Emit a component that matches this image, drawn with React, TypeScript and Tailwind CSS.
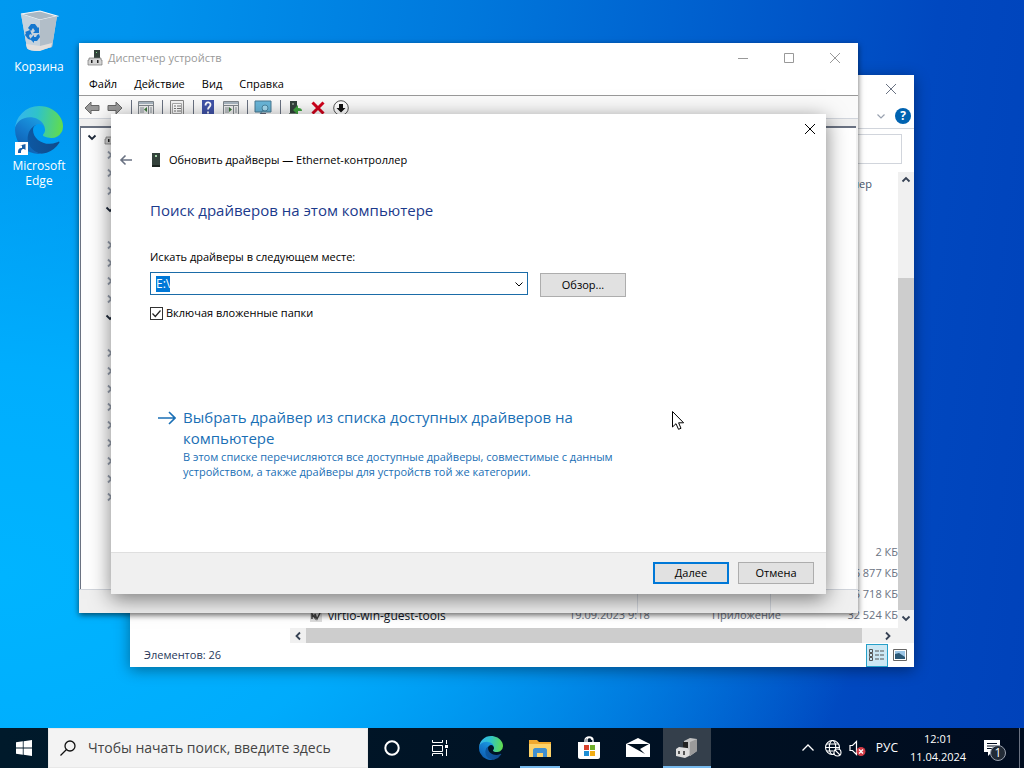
import { useEffect, useRef } from 'react';
import type { ReactNode } from 'react';
import clsx from 'clsx';

const menuItems = ['Файл', 'Действие', 'Вид', 'Справка'];

// one entry per visible tree line: c = collapsed, e = expanded, '' = leaf
const treeRows = ['c', 'c', 'c', 'e', '', 'c', 'c', 'c', 'c', 'e', '', 'c', 'c', 'c', 'c', 'c', 'c', 'c', 'c', 'c'];

const files = [
  { name: '', date: '', type: '', size: '2 КБ' },
  { name: '', date: '', type: '', size: '6 877 КБ' },
  { name: '', date: '', type: '', size: '5 718 КБ' },
  { name: 'virtio-win-guest-tools', date: '19.09.2023 9:18', type: 'Приложение', size: '32 524 КБ' },
];

type Direction = 'up' | 'down' | 'left' | 'right';

const chevronPaths: Record<Direction, string> = {
  up: 'M2.500 7.500 6 4l3.500 3.500',
  down: 'M2.500 4.500 6 8l3.500-3.500',
  left: 'M8 2.500 4.500 6 8 9.500',
  right: 'M4 2.500 7.500 6 4 9.500',
};

function Chevron({ dir, className, weight = 1.8 }: { dir: Direction; className?: string; weight?: number }) {
  return (
    <svg viewBox="0 0 12 12" className={clsx('size-3 shrink-0', className)} fill="none" stroke="currentColor" strokeWidth={weight}>
      <path d={chevronPaths[dir]} />
    </svg>
  );
}

function CloseIcon() {
  return (
    <svg viewBox="0 0 12 12" className="size-3" fill="none" stroke="currentColor" strokeWidth="1">
      <path d="M1 1l10 10M11 1L1 11" />
    </svg>
  );
}

function EdgeIcon({ className, id }: { className: string; id: string }) {
  return (
    <svg viewBox="0 0 256 256" className={className}>
      <defs>
        <linearGradient id={`${id}-a`} x1="0" y1="0" x2="1" y2="0">
          <stop offset="0" stopColor="#0c59a4" />
          <stop offset="1" stopColor="#114a8b" />
        </linearGradient>
        <linearGradient id={`${id}-b`} x1="0.8" y1="0.1" x2="0.3" y2="1">
          <stop offset="0" stopColor="#1b9de2" />
          <stop offset="0.5" stopColor="#1479cc" />
          <stop offset="1" stopColor="#0d5cae" />
        </linearGradient>
        <linearGradient id={`${id}-c`} x1="0" y1="0.4" x2="1" y2="0.5">
          <stop offset="0" stopColor="#35b4f1" />
          <stop offset="0.45" stopColor="#2fc3c9" />
          <stop offset="1" stopColor="#62dc4c" />
        </linearGradient>
      </defs>
      <path fill={`url(#${id}-a)`} d="M231 190.500c-3.400 1.800-6.900 3.300-10.500 4.700a101 101 0 0 1-35.900 6.500c-47.300 0-88.500-32.500-88.500-74.300a31.500 31.500 0 0 1 16.400-27.300c-42.800 1.800-53.800 46.400-53.800 72.500 0 73.900 68.100 81.400 82.800 81.400 7.900 0 19.800-2.300 27-4.600l1.300-.4a128 128 0 0 0 66.600-52.800 4 4 0 0 0-5.400-5.700z" />
      <path fill={`url(#${id}-b)`} d="M105.700 241.400a79 79 0 0 1-22.700-21.300A80.700 80.700 0 0 1 112.500 100c3.100-1.500 8.500-4.100 15.600-4a32.400 32.400 0 0 1 25.700 13 31.900 31.900 0 0 1 6.300 18.700c0-.2 24.500-79.600-80-79.600-43.900 0-80 41.700-80 78.200a130 130 0 0 0 12.100 56 128 128 0 0 0 156.400 67 75.500 75.500 0 0 1-62.800-8z" />
      <path fill={`url(#${id}-c)`} d="M152.300 148.900c-.9 1-3.400 2.500-3.400 5.600 0 2.600 1.700 5.200 4.800 7.300 14.300 10 41.400 8.600 41.500 8.600a59.600 59.600 0 0 0 30.300-8.300A61.400 61.400 0 0 0 256 109.200c.3-22.400-8-37.300-11.300-43.900C223.500 23.900 177.700 0 128 0A128 128 0 0 0 0 126.200c.5-36.500 36.800-66 80-66 3.500 0 23.500.3 42 10.100 16.300 8.600 24.900 18.900 30.800 29.200 6.200 10.700 7.300 24.100 7.300 29.500 0 5.300-2.700 13.300-7.800 19.900z" />
    </svg>
  );
}

function BinIcon() {
  return (
    <svg viewBox="0 0 40 44" className="h-11 w-10">
      <path d="M2 5l6 34c2 3 11 4 14 2l11-3 5-31-17-5z" fill="#d3dbe2" />
      <path d="M2 5l19-3 17 5-17 4z" fill="#a9b8c4" stroke="#f4f7f9" strokeWidth="1.200" />
      <path d="M2 5l19 6v30c-4 1-10 1-13-2z" fill="#c5d2dd" />
      <path d="M21 11l17-4-5 31-12 3z" fill="#b2bec8" />
      <path d="M7 35l14 2 12-3-1 4-11 4c-4 0-11 0-13-3z" fill="#e3dfdc" />
      <g fill="#1477cf">
        <path d="M9 19l3-4h4l3 4 1-1v6h-6l2-2-2-3-2 3z" />
        <path d="M20 25l1 3-3 4h-3v2l-4-4 4-4v2h2l1-2z" />
        <path d="M6 23l5-2 2 5-2-1-1 2 2 4-3-1-3-4 1-2z" />
      </g>
    </svg>
  );
}

// grey controller box with the dark card standing on it
function DevicesIcon({ className }: { className?: string }) {
  return (
    <svg viewBox="0 0 16 16" className={clsx('size-4 shrink-0', className)}>
      <path d="M7 0h6v9H7z" fill="#34423c" />
      <path d="M9 2h1v1H9z" fill="#7fdc8a" />
      <path d="M2 8h12v2h1v5H1v-5h1z" fill="#d4d4d4" stroke="#777" strokeWidth=".7" />
      <path d="M4 10h1.500v3H4zM10 10h1.500v3H10z" fill="#222" />
    </svg>
  );
}

function CardIcon() {
  return (
    <svg viewBox="0 0 10 16" className="h-4 w-2.5 shrink-0">
      <path d="M1 1h8v12H1z" fill="#34423c" />
      <path d="M4 3h2v2H4z" fill="#a5d8a8" />
      <path d="M1 13h8v2H1z" fill="#1d2521" />
    </svg>
  );
}

function PanelIcon({ mark }: { mark: string }) {
  return (
    <svg viewBox="0 0 16 16" className="size-4">
      <path d="M.5 1.500h15v13H.5z" fill="#f1f1f1" stroke="#7f868c" />
      <path d="M1 2h14v2H1z" fill="#a8b5c0" />
      <path d="M1 5.500h14M10.500 6v8" stroke="#7f868c" />
      <path d="M2 8h4M2 10h4M2 12h4M12 8h2M12 10h2M12 12h2" stroke="#8b949b" />
      <path d={mark} fill="#3d7a3d" />
    </svg>
  );
}

function ArrowGlyph({ flip }: { flip?: boolean }) {
  return (
    <svg viewBox="0 0 16 14" className={clsx('h-3.5 w-4', flip && '-scale-x-100')}>
      <path d="M1 7l6-6v3.500h8v5H7V13z" fill="#999" stroke="#666" />
    </svg>
  );
}

const toolbarGroups: { label: string; icon: ReactNode }[][] = [
  [
    { label: 'Назад', icon: <ArrowGlyph /> },
    { label: 'Вперёд', icon: <ArrowGlyph flip /> },
  ],
  [{ label: 'Дерево консоли', icon: <PanelIcon mark="M9 7v5L6 9.500z" /> }],
  [
    {
      label: 'Свойства',
      icon: (
        <svg viewBox="0 0 16 16" className="size-4">
          <path d="M1.500.5h13v15h-13z" fill="#f4f4f4" stroke="#888" />
          <path d="M3.500 3.500h9v10h-9z" fill="#fff" stroke="#aaa" />
          <path d="M5 6h2M8 6h4M5 8.500h2M8 8.500h4M5 11h2M8 11h4" stroke="#777" />
        </svg>
      ),
    },
  ],
  [
    {
      label: 'Справка',
      icon: (
        <svg viewBox="0 0 16 16" className="size-4">
          <path d="M2 0h12v16H2z" fill="#4053a8" />
          <path d="M5.500 5.500c0-4 5-4 5-.8 0 2.300-2.500 2.300-2.500 4.800M8 11.500v2" fill="none" stroke="#fff" strokeWidth="1.800" />
        </svg>
      ),
    },
    { label: 'Панель действий', icon: <PanelIcon mark="M6 7v5l3-2.500z" /> },
  ],
  [
    {
      label: 'Обновить конфигурацию',
      icon: (
        <svg viewBox="0 0 18 16" className="h-4 w-4.5">
          <path d="M1 1h16v11H1z" fill="#69b7da" stroke="#4a7b93" />
          <path d="M6 14h6" stroke="#667" strokeWidth="2" />
          <circle cx="11" cy="8" r="3" fill="#a6dcf2" stroke="#4b87a3" />
          <path d="M9 10l-3 4" stroke="#4b87a3" />
        </svg>
      ),
    },
  ],
  [
    {
      label: 'Обновить драйвер',
      icon: (
        <svg viewBox="0 0 16 16" className="size-4">
          <path d="M3 1h7v12H3z" fill="#34423c" />
          <path d="M5 3h2v2H5zM2 13h9v2H2z" fill="#7a8a80" />
          <path d="M6 10l5-5v3c3 0 4 1 4 3h-4v4z" fill="#3fa43f" />
        </svg>
      ),
    },
    {
      label: 'Удалить',
      icon: (
        <svg viewBox="0 0 16 16" className="size-4" stroke="#d0021b" strokeWidth="3">
          <path d="M2.500 2.500l11 11M13.500 2.500l-11 11" />
        </svg>
      ),
    },
    {
      label: 'Отключить',
      icon: (
        <svg viewBox="0 0 16 16" className="size-4">
          <circle cx="8" cy="8" r="7.300" fill="#fff" stroke="#555" />
          <path d="M6 4h4v4h2.500L8 12.500 3.500 8H6z" fill="#111" />
        </svg>
      ),
    },
  ],
];

function ExplorerWindow() {
  return (
    <section className="absolute top-[75px] left-[130px] flex h-[592px] w-[784px] flex-col bg-white text-[11px] shadow-[0_3px_14px_rgba(0,0,0,0.4)]">
      <div className="flex h-7 shrink-0 justify-end">
        <button aria-label="Закрыть" className="flex w-[46px] items-center justify-center text-gray-500">
          <CloseIcon />
        </button>
      </div>
      <div className="flex h-[26px] shrink-0 items-center justify-end gap-2 border-b border-gray-300 pr-[3px]">
        <Chevron dir="down" weight={1.2} className="text-gray-400" />
        <button aria-label="Справка" className="size-4 rounded-full bg-[#0063b1] text-center text-xs leading-4 font-bold text-white">
          ?
        </button>
      </div>
      <div className="flex shrink-0 justify-end pt-[5px] pr-3">
        <input aria-label="Поиск" className="h-[30px] w-[200px] border border-gray-300 px-2 outline-none" />
      </div>
      <div className="flex min-h-0 flex-1 pt-2">
        <div className="w-40 shrink-0" />
        <div className="flex min-w-0 flex-1 flex-col">
          <table className="h-full w-full table-fixed text-left text-gray-500">
            <thead>
              <tr className="h-6">
                <th className="w-[279px]" />
                <th className="w-[143px]" />
                <th />
                <th className="w-[75px] pr-[26px] text-right font-normal text-slate-600">Размер</th>
              </tr>
            </thead>
            <tbody>
              <tr>
                <td colSpan={4} />
              </tr>
              {files.map((file) => (
                <tr key={file.size} className="h-[21px] whitespace-nowrap">
                  <td className="text-xs text-gray-900">
                    {file.name && (
                      <span className="flex items-center gap-1.5 pl-5">
                        <svg viewBox="0 0 12 12" className="size-3">
                          <path d="M0 0h12v12H0z" fill="#ddd" />
                          <path d="M2 9V4l3 4V4l2 5 3-6" fill="none" stroke="#444" strokeWidth="1.500" />
                        </svg>
                        {file.name}
                      </span>
                    )}
                  </td>
                  <td>{file.date}</td>
                  <td>{file.type}</td>
                  <td className="text-right">{file.size}</td>
                </tr>
              ))}
            </tbody>
          </table>
          <div className="flex h-[17px] shrink-0 items-center border-t-2 border-white bg-[#f0f0f0] text-gray-700">
            <span className="flex w-4 justify-center">
              <Chevron dir="left" />
            </span>
            <span className="h-full flex-1 bg-[#cdcdcd]" />
            <span className="flex w-9 justify-center pl-4">
              <Chevron dir="right" />
            </span>
          </div>
        </div>
        <div className="flex w-4 shrink-0 flex-col items-center bg-[#f0f0f0] pb-[17px] text-gray-700">
          <span className="flex h-[106px] items-start pt-0.5">
            <Chevron dir="up" />
          </span>
          <span className="w-full flex-1 bg-[#cdcdcd]" />
          <span className="flex h-4 items-center">
            <Chevron dir="down" />
          </span>
        </div>
      </div>
      <footer className="flex h-6 shrink-0 items-center pr-0.5 pl-3.5 text-[#28385a]">
        <span className="flex-1">Элементов: 26</span>
        <button aria-label="Таблица" className="flex h-[23px] w-[22px] items-center justify-center border border-[#26a0c9] bg-[#cce8f4]">
          <svg viewBox="0 0 16 14" className="h-3.5 w-4" stroke="#555" fill="none">
            <path d="M.5 1.500h3v3h-3zM.5 5.500h3v3h-3zM.5 9.500h3v3h-3zM6 3h4M11 3h4M6 7h4M11 7h4M6 11h4M11 11h4" />
          </svg>
        </button>
        <button aria-label="Эскизы" className="flex h-full w-6 items-center justify-center">
          <svg viewBox="0 0 14 12" className="h-3 w-3.5">
            <path d="M.5.5h13v11H.5z" fill="#fff" stroke="#666" />
            <path d="M2 2h10v8H2z" fill="#9cc6e6" />
            <path d="M2 5l4-1 6 4v2H2z" fill="#2b5876" />
          </svg>
        </button>
      </footer>
    </section>
  );
}

function DeviceManagerWindow() {
  return (
    <section className="absolute top-[43px] left-[79px] flex h-[570px] w-[779px] flex-col bg-white text-[11px] shadow-[0_2px_6px_rgba(0,0,0,0.6)]">
      <header className="flex h-[30px] shrink-0 items-center pl-2 text-[#999]">
        <DevicesIcon />
        <h1 className="flex-1 pl-[5px]">Диспетчер устройств</h1>
        <button aria-label="Свернуть" className="flex w-[46px] justify-center">
          <svg viewBox="0 0 12 12" className="size-3" stroke="currentColor">
            <path d="M1 6.500h10" />
          </svg>
        </button>
        <button aria-label="Развернуть" className="flex w-[46px] justify-center">
          <svg viewBox="0 0 12 12" className="size-3" stroke="currentColor" fill="none">
            <path d="M1.500 1.500h9v9h-9z" />
          </svg>
        </button>
        <button aria-label="Закрыть" className="flex w-[46px] justify-center">
          <CloseIcon />
        </button>
      </header>
      <nav className="flex h-[23px] shrink-0 items-center gap-[17px] border-b border-[#999] pl-2.5 text-black">
        {menuItems.map((item) => (
          <button key={item}>{item}</button>
        ))}
      </nav>
      <div className="flex h-[23px] shrink-0 items-center border-b border-gray-300 bg-[#fafafa] pt-0.5 pl-[5px]">
        {toolbarGroups.map((group, i) => (
          <div key={i} className={clsx('flex items-center gap-[7px] pr-2', i > 0 && 'border-l border-gray-500 pl-1.5')}>
            {group.map(({ label, icon }) => (
              <button key={label} aria-label={label}>
                {icon}
              </button>
            ))}
          </div>
        ))}
      </div>
      <div className="flex min-h-0 flex-1 bg-[#f0f0f0] pt-[7px] pr-0.5 pl-px">
        <div className="flex-1 overflow-hidden border-t-2 border-l border-t-gray-500 border-l-gray-500 bg-white">
          <div className="flex h-[18px] items-center gap-1.5 pl-[5px]">
            <Chevron dir="down" className="text-gray-800" />
            <DevicesIcon />
          </div>
          {treeRows.map((row, i) => (
            <div key={i} className="flex h-[18px] items-center pl-[23px]">
              {row === 'c' && <Chevron dir="right" className="text-gray-400" />}
              {row === 'e' && <Chevron dir="down" className="text-gray-800" />}
            </div>
          ))}
        </div>
      </div>
      <footer className="flex h-6 shrink-0 border-t border-gray-300 bg-[#f0f0f0]">
        <span className="flex-1 border-r border-gray-300" />
        <span className="w-[133px] border-r border-gray-300" />
        <span className="w-[87px]" />
      </footer>
    </section>
  );
}

function DriverDialog() {
  const pathRef = useRef<HTMLInputElement>(null);

  // the path is preselected when the wizard page opens
  useEffect(() => {
    pathRef.current?.focus();
    pathRef.current?.select();
  }, []);

  return (
    <section
      role="dialog"
      aria-labelledby="wizard-title"
      className="absolute top-[114px] left-[111px] flex h-[480px] w-[715px] flex-col bg-white text-[11px] text-black shadow-[0_5px_20px_rgba(0,0,0,0.5)]"
    >
      <div className="flex h-[30px] shrink-0 justify-end">
        <button aria-label="Закрыть" className="flex w-8 items-center justify-center">
          <CloseIcon />
        </button>
      </div>
      <header className="flex h-8 shrink-0 items-center pl-2">
        <button aria-label="Назад" className="w-8 text-gray-500">
          <svg viewBox="0 0 14 12" className="h-3 w-3.5" fill="none" stroke="currentColor" strokeWidth="1.600">
            <path d="M13 6H2M6.500 1.500L2 6l4.500 4.500" />
          </svg>
        </button>
        <CardIcon />
        <h2 id="wizard-title" className="pl-2">
          Обновить драйверы — Ethernet-контроллер
        </h2>
      </header>
      <main className="flex-1 pt-6 pr-10 pl-[39px]">
        <h3 className="text-[15px] leading-5 text-[#1b3a8c]">Поиск драйверов на этом компьютере</h3>
        <label htmlFor="driver-path" className="mt-[29px] block leading-4">
          Искать драйверы в следующем месте:
        </label>
        <div className="mt-[7px] flex items-end gap-3">
          <div className="mb-0.5 flex h-[23px] w-[378px] items-center border border-[#1b6ca8] pr-0.5 pl-[5px]">
            <input
              id="driver-path"
              ref={pathRef}
              defaultValue="E:\"
              className="h-4 min-w-0 flex-1 text-xs leading-4 caret-transparent outline-none selection:bg-[#0078d7] selection:text-white"
            />
            <button aria-label="Показать список">
              <Chevron dir="down" weight={1} />
            </button>
          </div>
          <button className="h-6 w-[86px] border border-[#adadad] bg-[#e1e1e1]">Обзор...</button>
        </div>
        <label className="mt-2 flex items-center gap-[3px] leading-4">
          <span className="relative flex">
            <input type="checkbox" defaultChecked className="peer size-[13px] appearance-none border border-[#333] bg-white" />
            <svg viewBox="0 0 13 13" className="pointer-events-none absolute inset-0 hidden size-[13px] peer-checked:block" fill="none" stroke="#222" strokeWidth="1.200">
              <path d="M2.500 6.500l2.800 3 5.200-6" />
            </svg>
          </span>
          Включая вложенные папки
        </label>
        <a href="#driver-list" className="mt-[86px] flex gap-[7px] pl-2 text-[#1a6fb5]">
          <svg viewBox="0 0 18 20" className="h-5 w-[18px] shrink-0" fill="none" stroke="currentColor" strokeWidth="1.600">
            <path d="M0 11h17M11 5l6 6-6 6" />
          </svg>
          <span className="w-[450px]">
            <span className="block text-[15px] leading-[21px]">Выбрать драйвер из списка доступных драйверов на компьютере</span>
            <span className="block leading-[15px]">
              В этом списке перечисляются все доступные драйверы, совместимые с данным устройством, а также драйверы для устройств той же категории.
            </span>
          </span>
        </a>
      </main>
      <footer className="flex h-[42px] shrink-0 items-start justify-end gap-[9px] border-t border-[#dfdfdf] bg-[#f0f0f0] pt-[9px] pr-3">
        <button className="h-[22px] w-[76px] border-2 border-[#0078d7] bg-[#e1e1e1]">Далее</button>
        <button className="h-[22px] w-[76px] border border-[#adadad] bg-[#e1e1e1]">Отмена</button>
      </footer>
    </section>
  );
}

const pinnedApps: { label: string; state?: 'open' | 'active'; icon: ReactNode }[] = [
  { label: 'Microsoft Edge', icon: <EdgeIcon className="size-6" id="task-edge" /> },
  {
    label: 'Проводник',
    state: 'open',
    icon: (
      <svg viewBox="0 0 24 20" className="h-5 w-6">
        <path d="M1 2h8l2 2h12v15H1z" fill="#f0a92e" />
        <path d="M1 6h22v13H1z" fill="#fcd269" />
        <path d="M5 19v-7c0-1 1-2 2-2h10c1 0 2 1 2 2v7h-4v-4H9v4z" fill="#3f8fd0" />
      </svg>
    ),
  },
  {
    label: 'Microsoft Store',
    icon: (
      <svg viewBox="0 0 24 24" className="size-6">
        <path d="M8 7V4c0-4 8-4 8 0v3M10 6V3c1-2 5-2 5 1" fill="none" stroke="#fff" strokeWidth="1.300" />
        <path d="M1 6h22v15c0 1-1 2-2 2H3c-1 0-2-1-2-2z" fill="#fff" />
        <path d="M7 9h5v5H7z" fill="#d8402b" />
        <path d="M13 9h5v5h-5z" fill="#6fae2b" />
        <path d="M7 15h5v5H7z" fill="#1d8fd6" />
        <path d="M13 15h5v5h-5z" fill="#f3ae15" />
      </svg>
    ),
  },
  {
    label: 'Почта',
    icon: (
      <svg viewBox="0 0 24 20" className="h-5 w-6">
        <path d="M0 6L12 0l12 6v13H0z" fill="#fff" />
        <path d="M1 6h22l-9 5 5 5z" fill="#00101f" />
      </svg>
    ),
  },
  {
    label: 'Диспетчер устройств',
    state: 'active',
    icon: (
      <svg viewBox="0 0 24 22" className="h-5.5 w-6">
        <path d="M9 4l6-3 7 1v12l-7 5-6-3z" fill="#c2c2c2" />
        <path d="M15 5l7-3v12l-7 5z" fill="#9b9b9b" />
        <path d="M8 5h5v6H8z" fill="#222" />
        <path d="M1 12l3-2 8 1 2 2v6l-4 2-9-2z" fill="#dedede" />
        <path d="M3 14h2v3H3zM8 14h2v4H8z" fill="#555" />
      </svg>
    ),
  },
];

function Taskbar() {
  return (
    <footer className="relative flex h-10 w-full shrink-0 items-stretch bg-linear-to-r from-[#001a2b] to-[#000c1f] text-xs text-white">
      <button aria-label="Пуск" className="flex w-12 items-center justify-center">
        <svg viewBox="0 0 16 16" className="size-4" fill="#fff">
          <path d="M0 2.300l6.800-1v6.300H0zM7.600 1.200L16 0v7.600H7.600zM0 8.400h6.800v6.300l-6.800-1zM7.600 8.400H16V16l-8.400-1.200z" />
        </svg>
      </button>
      <label className="flex w-80 items-center gap-3 border border-[#e8e8e8] bg-[#f3f3f3] pl-[11px] text-[#222]">
        <svg viewBox="0 0 16 16" className="size-4 shrink-0" fill="none" stroke="#111" strokeWidth="1.300">
          <circle cx="10" cy="6" r="5" />
          <path d="M6.500 9.500L0.500 15.500" />
        </svg>
        <input
          aria-label="Поиск"
          placeholder="Чтобы начать поиск, введите здесь"
          className="min-w-0 flex-1 bg-transparent text-sm outline-none placeholder:text-[#444]"
        />
      </label>
      <button aria-label="Кортана" className="flex w-12 items-center justify-center">
        <svg viewBox="0 0 16 16" className="size-4" fill="none" stroke="#fff" strokeWidth="2">
          <circle cx="8" cy="8" r="6.700" />
        </svg>
      </button>
      <button aria-label="Представление задач" className="mr-[3px] flex w-12 items-center justify-center">
        <svg viewBox="0 0 16 16" className="size-4" fill="none" stroke="#fff">
          <path d="M.5 0v2.500h10V0M.5 5.500h10v6H.5zM.5 16v-2.500h10V16M14.500 0v4M14.500 9v7" />
          <path d="M13 5h3v3h-3z" fill="#fff" stroke="none" />
        </svg>
      </button>
      <div className="flex flex-1 gap-px">
        {pinnedApps.map(({ label, state, icon }) => (
          <button
            key={label}
            aria-label={label}
            className={clsx(
              'relative flex w-12 items-center justify-center after:absolute after:bottom-0 after:h-0.5',
              state === 'open' && 'after:inset-x-1 after:bg-[#76b9ed]',
              state === 'active' && 'bg-[#343f4b] after:inset-x-0 after:bg-[#76b9ed]',
            )}
          >
            {icon}
          </button>
        ))}
      </div>
      <div className="flex items-center">
        <div className="flex items-center gap-1.5">
          <button aria-label="Показать скрытые значки" className="flex w-5 justify-center">
            <svg viewBox="0 0 14 14" className="size-3.5" fill="none" stroke="#fff" strokeWidth="1.300">
              <path d="M1.500 9.500L7 4l5.500 5.500" />
            </svg>
          </button>
          <button aria-label="Сеть">
            <svg viewBox="0 0 18 18" className="size-[18px]" fill="none" stroke="#fff" strokeWidth="1.100">
              <circle cx="8.500" cy="8.500" r="7" />
              <ellipse cx="8.500" cy="8.500" rx="3.200" ry="7" />
              <path d="M1.500 8.500h14M2.500 5h12M2.500 12h7" />
              <circle cx="13.500" cy="13.500" r="3.500" fill="#000c1f" />
              <path d="M11 11l5 5" />
            </svg>
          </button>
          <button aria-label="Громкость">
            <svg viewBox="0 0 18 18" className="size-[18px]" fill="none">
              <path d="M2 6.500h2.500l4-4v13l-4-4H2z" stroke="#fff" strokeWidth="1.200" />
              <circle cx="13" cy="12.500" r="4.500" fill="#d13a45" />
              <path d="M11 10.500l4 4M15 10.500l-4 4" stroke="#fff" strokeWidth="1.300" />
            </svg>
          </button>
          <button className="px-1">РУС</button>
        </div>
        <time className="w-[72px] text-center text-[11px] leading-[18px]">
          12:01
          <br />
          11.04.2024
        </time>
        <button aria-label="Уведомления" className="relative flex w-[45px] pl-[9px]">
          <svg viewBox="0 0 18 18" className="size-[18px]">
            <path d="M1 1h16v12H9l-4 4v-4H1z" fill="#fff" />
            <path d="M4 4.500h10M4 7h10M4 9.500h6" stroke="#000c1f" />
          </svg>
          <span className="absolute top-1.5 left-4 size-4 rounded-full border border-gray-400 bg-[#222b36] text-center text-xs leading-3.5">1</span>
        </button>
      </div>
      <button aria-label="Свернуть все окна" className="w-[5px] border-l border-gray-500" />
    </footer>
  );
}

export default function App() {
  return (
    <div
      className={clsx(
        "relative flex h-screen w-full flex-col overflow-hidden font-['Open_Sans','Noto_Sans',sans-serif]",
        'bg-[linear-gradient(97deg,#0099f0_0%,#0094ee_12%,#0078dc_42%,#005acb_68%,#0048c0_84%,#0042ba_100%)]',
      )}
    >
      <div className="absolute inset-0 bg-[radial-gradient(ellipse_at_0%_75%,#00b4ff_0%,rgba(0,176,255,0.9)_25%,rgba(0,160,255,0)_60%)]" />
      <div className="relative flex-1">
        <div className="flex w-[78px] flex-col items-center gap-8 pt-[9px] text-center text-xs leading-[15px] text-white [text-shadow:0_1px_2px_#000,1px_1px_2px_#000]">
          <button className="flex flex-col items-center gap-1.5">
            <BinIcon />
            Корзина
          </button>
          <button className="relative flex flex-col items-center gap-1">
            <EdgeIcon className="size-12" id="desk-edge" />
            <span>
              Microsoft
              <br />
              Edge
            </span>
            <svg viewBox="0 0 13 13" className="absolute top-9 left-0.5 size-[13px]">
              <path d="M0 0h13v13H0z" fill="#fff" />
              <path d="M3 11c0-4 1-5 4-5V3.500h-2L10.500 2v6L9 7c-3 0-3 2-3 4z" fill="#1a5fa8" />
            </svg>
          </button>
        </div>
        <ExplorerWindow />
        <DeviceManagerWindow />
        <DriverDialog />
        <svg viewBox="0 0 12 19" className="absolute top-[411px] left-[672px] h-[19px] w-3">
          <path d="M.5.500v15.500l3.500-3.300 2.500 5.600 2.500-1-2.400-5.500h5z" fill="#fff" stroke="#000" />
        </svg>
      </div>
      <Taskbar />
    </div>
  );
}
